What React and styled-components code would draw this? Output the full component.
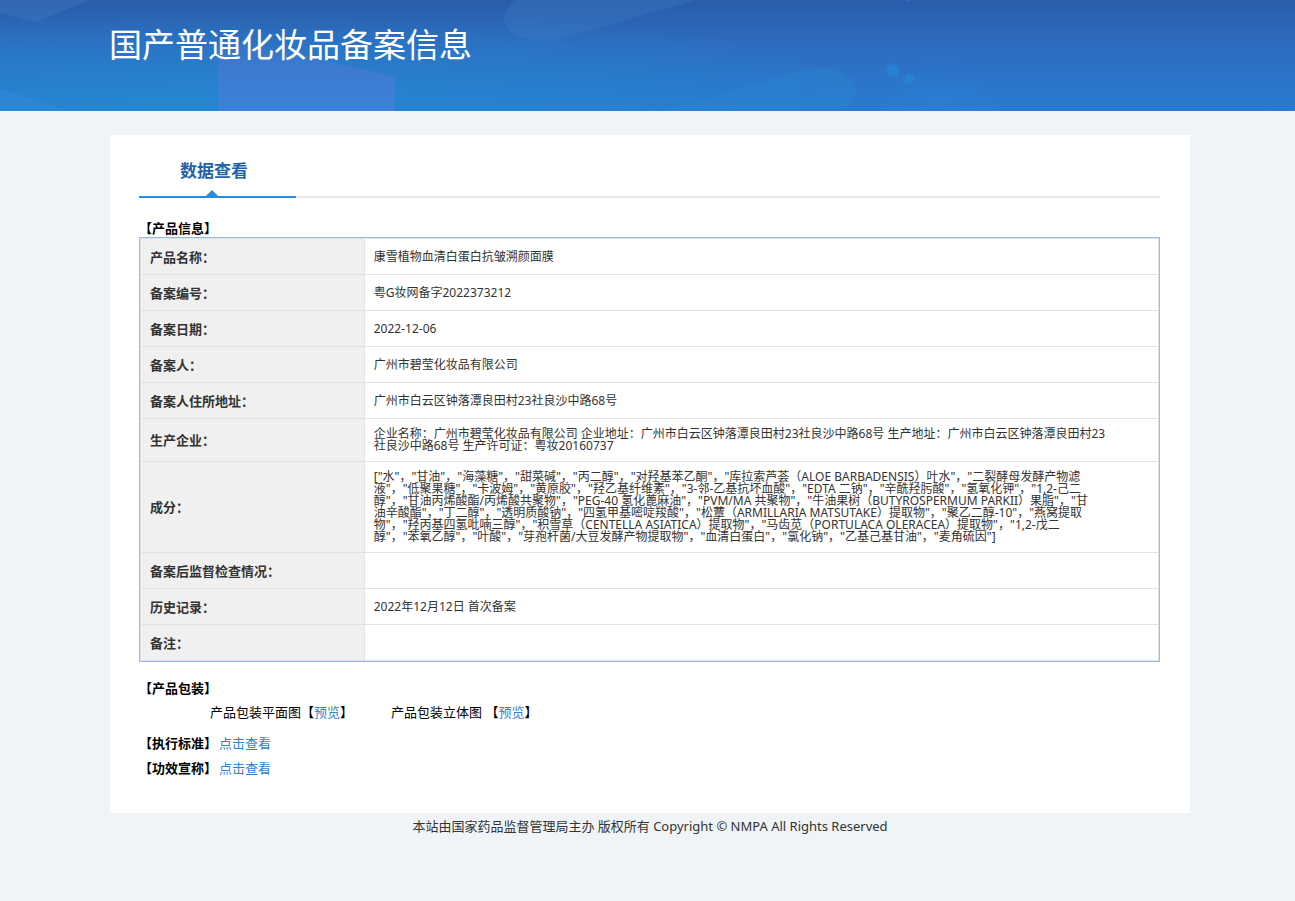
import styled, { createGlobalStyle } from 'styled-components';

const rows = [
  { label: '产品名称：', value: '康雪植物血清白蛋白抗皱溯颜面膜' },
  { label: '备案编号：', value: '粤G妆网备字2022373212' },
  { label: '备案日期：', value: '2022-12-06' },
  { label: '备案人：', value: '广州市碧莹化妆品有限公司' },
  { label: '备案人住所地址：', value: '广州市白云区钟落潭良田村23社良沙中路68号' },
  {
    label: '生产企业：',
    value: `企业名称：广州市碧莹化妆品有限公司 企业地址：广州市白云区钟落潭良田村23社良沙中路68号 生产地址：广州市白云区钟落潭良田村23
社良沙中路68号 生产许可证：粤妆20160737`,
  },
  {
    label: '成分：',
    value: `["水"，"甘油"，"海藻糖"，"甜菜碱"，"丙二醇"，"对羟基苯乙酮"，"库拉索芦荟（ALOE BARBADENSIS）叶水"，"二裂酵母发酵产物滤
液"，"低聚果糖"，"卡波姆"，"黄原胶"，"羟乙基纤维素"，"3-邻-乙基抗坏血酸"，"EDTA 二钠"，"辛酰羟肟酸"，"氢氧化钾"，"1,2-己二
醇"，"甘油丙烯酸酯/丙烯酸共聚物"，"PEG-40 氢化蓖麻油"，"PVM/MA 共聚物"，"牛油果树（BUTYROSPERMUM PARKII）果脂"，"甘
油辛酸酯"，"丁二醇"，"透明质酸钠"，"四氢甲基嘧啶羧酸"，"松蕈（ARMILLARIA MATSUTAKE）提取物"，"聚乙二醇-10"，"燕窝提取
物"，"羟丙基四氢吡喃三醇"，"积雪草（CENTELLA ASIATICA）提取物"，"马齿苋（PORTULACA OLERACEA）提取物"，"1,2-戊二
醇"，"苯氧乙醇"，"叶酸"，"芽孢杆菌/大豆发酵产物提取物"，"血清白蛋白"，"氯化钠"，"乙基己基甘油"，"麦角硫因"]`,
  },
  { label: '备案后监督检查情况：', value: '' },
  { label: '历史记录：', value: '2022年12月12日 首次备案' },
  { label: '备注：', value: '' },
];

export default function App() {
  return (
    <>
      <GlobalStyle />
      <Banner>
        <BannerArt />
        <Title>国产普通化妆品备案信息</Title>
      </Banner>
      <Card>
        <TabBar>
          <Tab>数据查看</Tab>
        </TabBar>
        <SectionTitle>【产品信息】</SectionTitle>
        <InfoTable>
          <tbody>
            {rows.map(({ label, value }) => (
              <tr key={label}>
                <LabelCell scope='row'>{label}</LabelCell>
                <ValueCell>{value}</ValueCell>
              </tr>
            ))}
          </tbody>
        </InfoTable>
        <PackageTitle>【产品包装】</PackageTitle>
        <PackageRow>
          <span>
            产品包装平面图【<Link href='#flat'>预览</Link>】
          </span>
          <span>
            产品包装立体图 【<Link href='#solid'>预览</Link>】
          </span>
        </PackageRow>
        <LinkRow>
          <SectionTitle>【执行标准】</SectionTitle>
          <Link href='#standard'>点击查看</Link>
        </LinkRow>
        <LinkRow>
          <SectionTitle>【功效宣称】</SectionTitle>
          <Link href='#effect'>点击查看</Link>
        </LinkRow>
      </Card>
      <Footer>本站由国家药品监督管理局主办 版权所有 Copyright © NMPA All Rights Reserved</Footer>
    </>
  );
}

function BannerArt() {
  return (
    <Art viewBox='0 0 1295 111' preserveAspectRatio='none' aria-hidden='true'>
      <defs>
        <linearGradient id='base' x1='0' y1='0' x2='0' y2='1'>
          <stop offset='0' stopColor='#2a5ca9' />
          <stop offset='0.4' stopColor='#2d6cc0' />
          <stop offset='1' stopColor='#297bd2' />
        </linearGradient>
        <radialGradient id='left' cx='0.3' cy='1' r='0.9' fx='0.25' fy='1'>
          <stop offset='0' stopColor='#218dd3' stopOpacity='0.75' />
          <stop offset='0.5' stopColor='#248ad0' stopOpacity='0.4' />
          <stop offset='1' stopColor='#248ad0' stopOpacity='0' />
        </radialGradient>
        <linearGradient id='box' x1='0' y1='0' x2='0' y2='1'>
          <stop offset='0' stopColor='#3f76ca' stopOpacity='0.4' />
          <stop offset='0.4' stopColor='#3d7ad0' />
          <stop offset='1' stopColor='#3a82dc' />
        </linearGradient>
        <linearGradient id='pill' x1='0' y1='0' x2='1' y2='0'>
          <stop offset='0' stopColor='#2b86d6' stopOpacity='0.2' />
          <stop offset='1' stopColor='#2b82ce' stopOpacity='0.5' />
        </linearGradient>
        <radialGradient id='glow'>
          <stop offset='0' stopColor='#2f80dc' stopOpacity='0.4' />
          <stop offset='1' stopColor='#2f80dc' stopOpacity='0' />
        </radialGradient>
        <radialGradient id='dot'>
          <stop offset='0.6' stopColor='#2687dd' stopOpacity='0.7' />
          <stop offset='1' stopColor='#2687dd' stopOpacity='0' />
        </radialGradient>
      </defs>
      <rect width='1295' height='111' fill='url(#base)' />
      <rect width='800' height='111' fill='url(#left)' />
      <path d='M0 0H90L36 22L0 13Z' fill='#4a80c8' opacity='0.3' />
      <path d='M0 89L70 111H0Z' fill='#3b92e0' opacity='0.3' />
      <path d='M218 43L270 47L395 77V111H218Z' fill='url(#box)' />
      <path d='M515 0C496 16 502 34 530 39C545 42 558 40 570 36L696 0Z' fill='#3e82c8' opacity='0.3' />
      <path d='M665 111L790 74C825 63 852 70 856 88C857 98 850 105 840 111Z' fill='url(#pill)' />
      <ellipse cx='940' cy='105' rx='60' ry='46' fill='url(#glow)' />
      <circle cx='893' cy='71' r='8' fill='url(#dot)' />
      <circle cx='909' cy='79' r='6' fill='url(#dot)' />
      <circle cx='908' cy='-3' r='5' fill='url(#dot)' />
    </Art>
  );
}

const GlobalStyle = createGlobalStyle`
  body {
    margin: 0;
    background: #f0f4f7;
    color: #000;
    font-family: 'Noto Sans', 'Noto Sans CJK SC', sans-serif;
    font-size: 13px;
    line-height: 18px;
  }
`;

const Banner = styled.header`
  position: relative;
  height: 111px;
  box-sizing: border-box;
  padding: 21px 24px 0 109px;
  overflow: hidden;
  background: #2b70c5;
`;

const Art = styled.svg`
  position: absolute;
  inset: 0;
  width: 100%;
  height: 100%;
`;

const Title = styled.h1`
  position: relative;
  margin: 0;
  color: #fff;
  font-size: 33px;
  font-weight: 400;
  line-height: 48px;
`;

const Card = styled.main`
  max-width: 1080px;
  box-sizing: border-box;
  margin: 24px 105px 0 110px;
  padding: 15px 30px 29px 29px;
  background: #fff;
`;

const TabBar = styled.div`
  display: flex;
  margin-bottom: 22px;
  box-shadow: inset 0 -2px #e8e8e8;
`;

const Tab = styled.h2`
  position: relative;
  width: 157px;
  box-sizing: border-box;
  margin: 0;
  padding: 10px 0 15px 41px;
  border-bottom: 2px solid #268ddd;
  color: #1f63a8;
  font-size: 17px;
  line-height: 21px;

  &::after {
    content: '';
    position: absolute;
    bottom: 0;
    left: 67px;
    border: 6px solid transparent;
    border-top: 0;
    border-bottom-color: #268ddd;
  }
`;

const SectionTitle = styled.h3`
  margin: 0;
  font-size: 13px;
  font-weight: 700;
  line-height: 17px;
`;

const InfoTable = styled.table`
  width: 100%;
  padding: 1px 1px 0;
  border: 1px solid #99bbe8;
  border-spacing: 0;
  box-shadow: inset 0 0 0 1px #e2e2e2;
  color: #333;
`;

const LabelCell = styled.th`
  width: 22%;
  height: 36px;
  box-sizing: border-box;
  padding: 0 9px;
  border-right: 1px solid #e2e2e2;
  border-bottom: 1px solid #e2e2e2;
  background: #f0f0f0;
  font-size: 13px;
  text-align: left;
`;

const ValueCell = styled.td`
  padding: 9px;
  border-bottom: 1px solid #e2e2e2;
  font-size: 12px;
  line-height: 12px;
  white-space: pre-line;
`;

const PackageTitle = styled(SectionTitle)`
  margin-top: 18px;
`;

const PackageRow = styled.div`
  display: flex;
  gap: 38px;
  margin-bottom: 13px;
  padding: 6px 0 0 71px;
`;

const LinkRow = styled.div`
  display: flex;
  gap: 2px;
  align-items: center;
  margin-bottom: 7px;
`;

const Link = styled.a`
  color: #2e82cf;
  text-decoration: none;
`;

const Footer = styled.footer`
  padding: 4px 0 5px 5px;
  color: #333;
  text-align: center;
`;
